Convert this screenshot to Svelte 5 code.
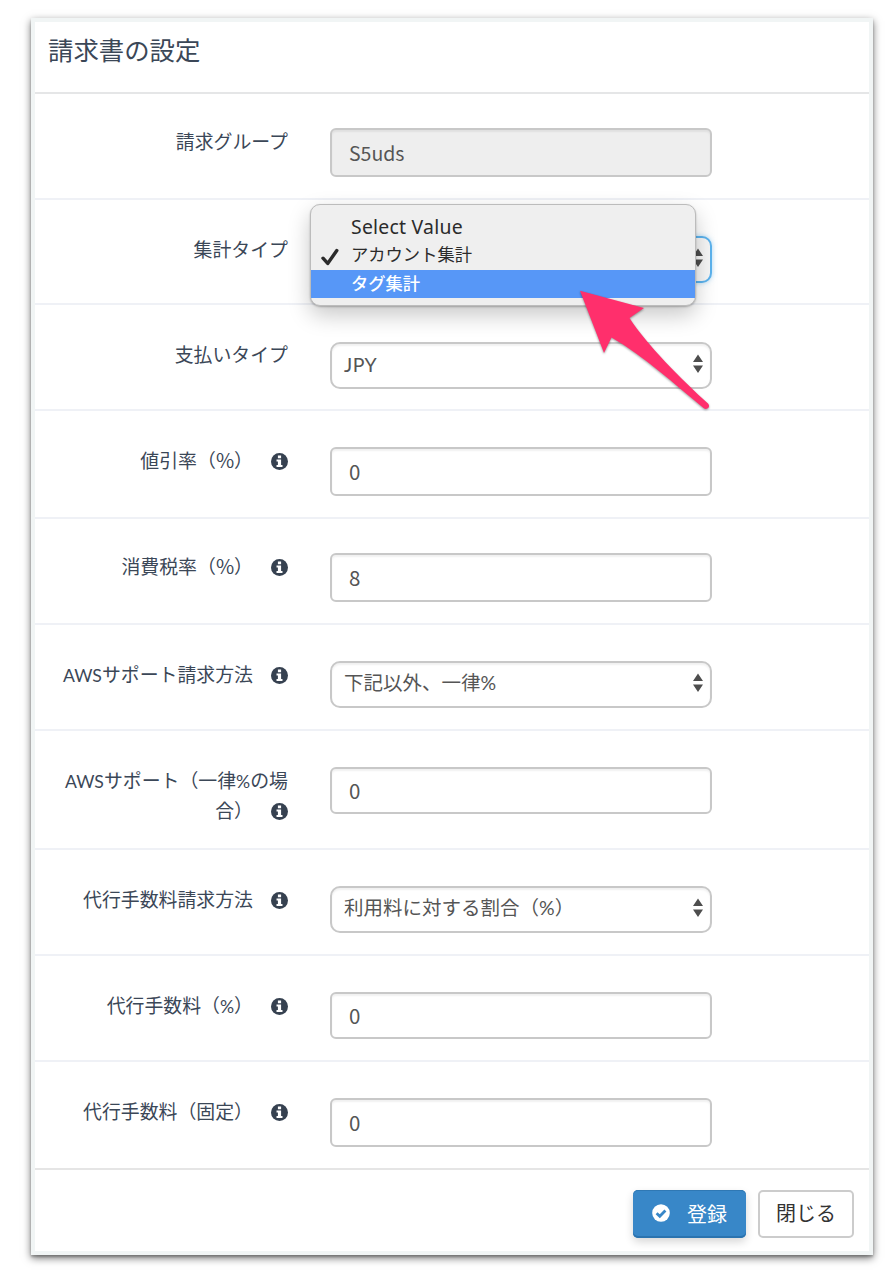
<script>
  const rows = [
    { label: '請求グループ', kind: 'input', value: 'S5uds', disabled: true, row: 106, top: 34, h: 49, lt: -1 },
    { label: '集計タイプ', kind: 'select', value: '', menu: true, row: 105, top: 36, h: 47, lt: -1 },
    { label: '支払いタイプ', kind: 'select', value: 'JPY', row: 106, top: 37, h: 47, lt: -2 },
    { label: '値引率（%）', wide: true, info: true, kind: 'input', value: '0', row: 108, top: 36, h: 49, lt: -1 },
    { label: '消費税率（%）', wide: true, info: true, kind: 'input', value: '8', row: 106, top: 34, h: 49, lt: -1 },
    { label: 'AWSサポート請求方法', info: true, kind: 'select', value: '下記以外、一律%', row: 106, top: 36, h: 47, lt: -1 },
    { label: 'AWSサポート（一律%の場\n合）', info: true, kind: 'input', value: '0', row: 119, top: 36, h: 47, lt: -1 },
    { label: '代行手数料請求方法', info: true, kind: 'select', value: '利用料に対する割合（%）', row: 106, top: 36, h: 47, lt: -1 },
    { label: '代行手数料（%）', info: true, kind: 'input', value: '0', row: 106, top: 36, h: 47, lt: -1 },
    { label: '代行手数料（固定）', info: true, kind: 'input', value: '0', row: 108, top: 36, h: 49, lt: -1 }
  ];

  // Splits a line into Latin runs and Japanese runs so that each can carry its own size.
  const runs = (text) => text.split(/([A-Z]+|%)/).filter(Boolean);
</script>

<div class="dialog">
  <header><h1>請求書の設定</h1></header>

  <form>
    {#each rows as r}
      <div class="row" style="height:{r.row}px;padding-top:{r.top}px">
        <div class="label" style="margin-top:{r.lt}px">
          {#each r.label.split('\n') as line, i}
            <div class="line">{#each runs(line) as t}<span class:small={/[A-Z%]/.test(t) && !r.wide} class:large={t === '%' && r.wide}>{t}</span>{/each}{#if r.info && i === r.label.split('\n').length - 1}<svg class="info" viewBox="0 0 16 16"><circle cx="8" cy="8" r="8" /><path d="M6.5 2.400h3v2.500h-3zM5.200 6.100h4.300v5.100h1.300v2H5.200v-2h1.300V8.100H5.200z" /></svg>{/if}</div>
          {/each}
        </div>
        <div class="control" style="height:{r.h}px">
          {#if r.kind === 'input'}
            <input type="text" class:number={!r.disabled} value={r.value} disabled={r.disabled} />
          {:else}
            <div class="select" class:focus={r.menu}>
              <span class="value" class:latin={r.value === 'JPY'}>{r.value}</span>
              <svg class="caret" viewBox="0 0 10 20"><path d="M5 .5 10 8H0zM0 11.5h10L5 19z" /></svg>
            </div>
          {/if}
          {#if r.menu}
            <div class="menu">
              <div class="option en">Select Value</div>
              <div class="option">
                <svg class="tick" viewBox="0 0 18 18"><path d="M2 10.2 6.7 15.4 15.8 2.6" /></svg>アカウント集計
              </div>
              <div class="option active">タグ集計</div>
            </div>
          {/if}
        </div>
      </div>
    {/each}
  </form>

  <footer>
    <button class="primary">
      <svg viewBox="0 0 18 18"><circle cx="9" cy="9" r="8.8" /><path d="M4.6 9.2 7.8 12.3 13.4 6.6" /></svg>登録
    </button>
    <button class="plain">閉じる</button>
  </footer>

  <svg class="arrow" viewBox="0 0 140 130">
    <path d="M5 5.7 69 23 54.5 33C72 60 106 94 133 118.5C136 121.5 132 126 128.500 123C98 98 70 72 36.500 52.500L29 68Z" />
  </svg>
</div>

<style>
  :global(body) { background: #fff; }
  .dialog {
    position: relative;
    box-sizing: border-box;
    width: 842px;
    height: 1237px;
    margin: 18px 0 17px 31px;
    border: 4px solid #f1f5f5;
    background: #fff;
    box-shadow: 0 3px 8px rgba(0, 0, 0, .55), 0 2px 2px rgba(0, 0, 0, .22);
    color: #3b4757;
    font-family: Lato, "Noto Sans CJK JP", sans-serif;
    font-size: 18.9px;
  }
  header {
    box-sizing: border-box;
    height: 72px;
    padding: 9px 14px 0;
    border-bottom: 2px solid #e5e6e7;
  }
  h1 { margin: 0 0 0 -1px; font-size: 25.4px; line-height: 38px; font-weight: 400; }
  .row {
    box-sizing: border-box;
    display: flex;
    align-items: flex-start;
    gap: 42px;
    border-bottom: 2px solid #eff1f6;
  }
  .row:last-child { border-color: #e5e5e5; }
  .label { width: 253px; line-height: 30px; text-align: right; }
  .line { height: 30px; white-space: nowrap; }
  .small { font-size: 17.6px; line-height: 1; }
  .large { font-family: "Noto Sans CJK JP", sans-serif; font-size: 19.8px; line-height: 1; }
  .info { width: 17px; height: 17px; margin-left: 18px; vertical-align: -2px; fill: #364150; }
  .info path { fill: #fff; }
  .control { position: relative; width: 382px; }
  input, .select {
    box-sizing: border-box;
    width: 100%;
    height: 100%;
    margin: 0;
    border: 2px solid #c8c8c8;
    background: #fff;
    box-shadow: inset 0 2px 2px rgba(0, 0, 0, .06);
    color: #555;
    font: inherit;
    display: block;
  }
  input {
    padding: 0 17px;
    border-radius: 6px;
    font-family: "Noto Sans CJK JP", sans-serif;
    font-size: 19.5px;
  }
  input.number { padding: 0 17px 2px; font-size: 20.5px; }
  input:disabled { background: #eee; }
  .select {
    display: flex;
    align-items: center;
    justify-content: space-between;
    padding: 0 7px 0 12px;
    border-radius: 10px;
  }
  .value { font-size: 19.5px; line-height: 30px; margin-top: -4px; }
  .value.latin { margin-top: -2px; letter-spacing: .4px; }
  .select.focus { border-color: #5cb3ee; background: #f7f7f7; box-shadow: 0 0 5px rgba(92, 179, 238, .5); }
  .caret { width: 10px; height: 20px; fill: #4e4e4e; margin-top: -3px; }
  .menu {
    position: absolute;
    left: -20px;
    top: -32px;
    z-index: 1;
    box-sizing: border-box;
    width: 386px;
    height: 102px;
    padding: 8px 0 0;
    border: 1px solid #bcbcbc;
    border-radius: 10px;
    background: #efefef;
    box-shadow: 0 9px 22px rgba(0, 0, 0, .22), 0 1px 2px rgba(0, 0, 0, .25);
    color: #2b2b2b;
  }
  .option { position: relative; height: 28.300px; padding-left: 40px; line-height: 28px; font-size: 17.3px; font-weight: 400; }
  .option.en { font-family: "Noto Sans", sans-serif; font-size: 19.4px; letter-spacing: .25px; }
  .option.active { background: #5797f7; color: #fff; font-weight: 500; }
  .tick { position: absolute; left: 10px; top: 7px; width: 18px; height: 18px; fill: none; stroke: #2b2b2b; stroke-width: 3.4; stroke-linejoin: round; stroke-linecap: round; }
  footer { display: flex; justify-content: flex-end; gap: 12px; padding: 20px 15px 0; }
  button {
    box-sizing: border-box;
    display: flex;
    align-items: center;
    justify-content: center;
    height: 48px;
    padding: 0 0 2px;
    border-radius: 5px;
    font-family: "Noto Sans CJK JP", sans-serif;
    font-size: 20px;
  }
  .primary {
    width: 113px;
    gap: 17px;
    border: 0;
    background: #3887c8;
    color: #fff;
    box-shadow: inset 0 -2px 0 #2a73af, inset 0 1px 0 #2f78b4, 0 4px 8px rgba(0, 0, 0, .16);
  }
  .primary svg { width: 18px; height: 18px; fill: #fff; }
  .primary path { fill: none; stroke: #3887c8; stroke-width: 2.8; }
  .plain { width: 96px; padding-bottom: 3px; border: 2px solid #ccc; background: #fff; color: #333; }
  .arrow {
    position: absolute;
    left: 540px;
    top: 263px;
    z-index: 2;
    width: 140px;
    height: 130px;
    fill: #ff2f6c;
    filter: drop-shadow(0 1px 1px rgba(0, 0, 0, .4));
  }
</style>
